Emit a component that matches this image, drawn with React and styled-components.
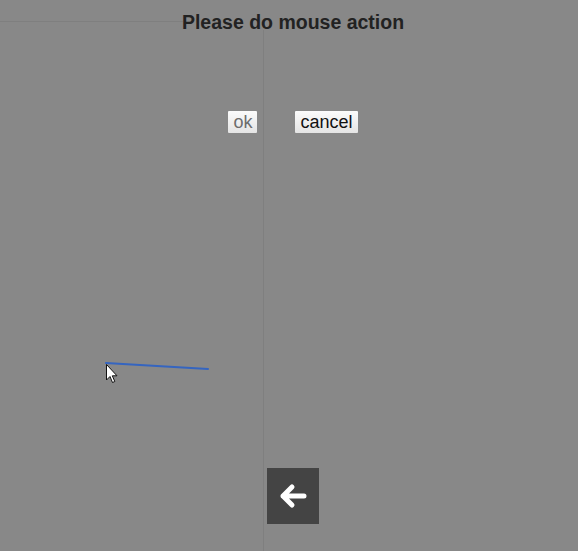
import React from 'react';
import styled, { createGlobalStyle } from 'styled-components';

const Global = createGlobalStyle`
  html, body { margin: 0; padding: 0; background: #888888; }
  body { font-family: "Liberation Sans", Arial, sans-serif; }
`;

const Stage = styled.div`
  position: relative;
  width: 578px;
  height: 551px;
  overflow: hidden;
  background: #888888;
  display: flex;
  flex-direction: column;
  align-items: center;
  padding-left: 8px;
  box-sizing: border-box;
`;

const GuideH = styled.div`
  position: absolute;
  left: 0;
  width: 183px;
  top: 21px;
  height: 1px;
  background: #7f7f7f;
`;

const GuideV = styled.div`
  position: absolute;
  top: 30px;
  bottom: 0;
  left: 263px;
  width: 1px;
  background: #7f7f7f;
`;

const Title = styled.h1`
  position: relative;
  margin: 10px 0 0;
  font-size: 19.5px;
  line-height: 24px;
  font-weight: bold;
  color: #222222;
`;

const Actions = styled.div`
  position: relative;
  display: flex;
  gap: 38px;
  margin-top: 77px;
`;

const Btn = styled.button`
  height: 22px;
  padding: 0 5px;
  border: none;
  border-radius: 1px;
  background: linear-gradient(#fbfbfb, #e4e4e4);
  font-family: "Liberation Sans", Arial, sans-serif;
  font-size: 18px;
  line-height: 22px;
  color: ${p => (p.disabled ? '#6d6d6d' : '#111111')};
`;

const Canvas = styled.svg`
  position: absolute;
  left: 0;
  top: 0;
  pointer-events: none;
`;

const Back = styled.button`
  position: relative;
  margin-top: auto;
  margin-bottom: 27px;
  width: 52px;
  height: 56px;
  border: none;
  background: #444444;
  display: flex;
  align-items: center;
  justify-content: center;
  padding: 0;
`;

export default function App() {
  return (
    <Stage>
      <Global />
      <GuideH />
      <GuideV />
      <Title>Please do mouse action</Title>
      <Actions>
        <Btn disabled>ok</Btn>
        <Btn>cancel</Btn>
      </Actions>
      <Canvas width="578" height="551">
        <polyline points="106,363 140,365 208,369" fill="none" stroke="#3565c0" strokeWidth="2" strokeLinecap="round" />
        <path d="M106.5 364.5 L106.5 380 L110 376.5 L112.5 382.5 L114.8 381.5 L112.3 375.8 L117 375.8 Z" fill="#ffffff" stroke="#111111" strokeWidth="1" strokeLinejoin="round" />
      </Canvas>
      <Back>
        <svg width="30" height="30" viewBox="0 0 30 30">
          <path d="M26 15 H5 M14 6 L5 15 L14 24" fill="none" stroke="#ffffff" strokeWidth="5" strokeLinecap="round" strokeLinejoin="round" />
        </svg>
      </Back>
    </Stage>
  );
}
